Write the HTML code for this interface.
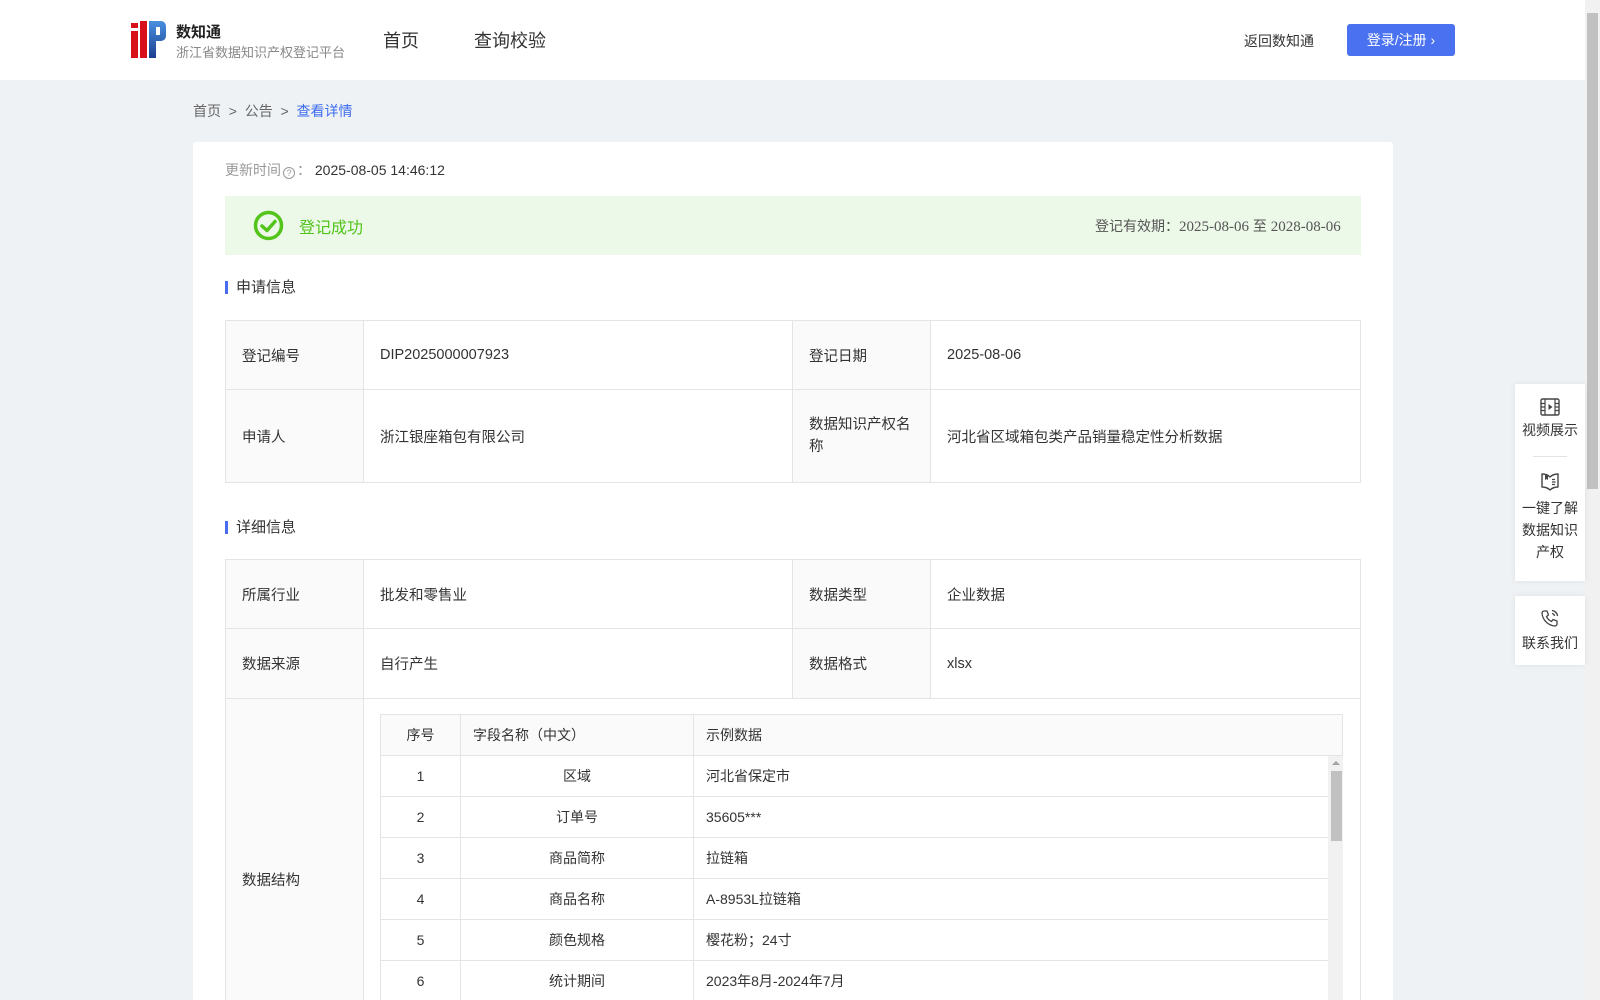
<!DOCTYPE html>
<html><head><meta charset="utf-8">
<style>
*{margin:0;padding:0;box-sizing:border-box}
html,body{width:1600px;height:1000px;overflow:hidden}
body{background:#eff2f5;font-family:"Liberation Sans","Noto Sans CJK SC",sans-serif;font-size:14px;color:#333;position:relative}
#wrap{position:absolute;left:0;top:0;width:1600px;height:1000px;overflow:hidden}
.a{position:absolute}
.hdr{left:0;top:0;width:1585px;height:80px;background:#fff}
.card{left:193px;top:142px;width:1200px;height:858px;background:#fff;border-radius:3px 3px 0 0}
table{border-collapse:collapse;position:absolute}
td{border:1px solid #e4e4e4;padding:0 16px;font-size:14.5px;color:#333}
td.l{background:#fafafa}
.it td{height:41px;padding:0 12px;font-size:14px}
.it td.c{text-align:center}
.sec{font-size:15px;color:#333;padding-left:8px;border-left:3px solid #4a6cf0;line-height:13px}
.fl{background:#fff;box-shadow:0 0 6px rgba(0,0,0,.08);text-align:center;font-size:14px;color:#333}
</style></head><body><div id="wrap">
<div class="a hdr"></div>
<svg class="a" style="left:131px;top:21px" width="35" height="37" viewBox="0 0 35 37">
<defs><linearGradient id="g" x1="0" y1="0" x2="0" y2="1"><stop offset="0" stop-color="#4a90e0"/><stop offset="1" stop-color="#1d3f8f"/></linearGradient></defs>
<rect x="0" y="2" width="7" height="5" fill="#d8101a"/>
<rect x="0" y="10" width="7" height="27" fill="#d8101a"/>
<rect x="9" y="0" width="7" height="37" fill="#d8101a"/>
<path d="M18 0h12a5 5 0 0 1 5 5v10a5 5 0 0 1-5 5h-5v17h-7z" fill="url(#g)"/>
<rect x="25" y="6" width="4" height="8" fill="#fff"/>
</svg>
<div class="a" style="left:176px;top:21px;font-size:15px;font-weight:bold;color:#222">数知通</div>
<div class="a" style="left:176px;top:42px;font-size:13px;color:#888">浙江省数据知识产权登记平台</div>
<div class="a" style="left:383px;top:27px;font-size:18px;color:#333">首页</div>
<div class="a" style="left:474px;top:27px;font-size:18px;color:#333">查询校验</div>
<div class="a" style="left:1244px;top:31px;font-size:14px;color:#333">返回数知通</div>
<div class="a" style="left:1347px;top:24px;width:108px;height:32px;background:#4a72f0;border-radius:3px;color:#fff;font-size:14px;line-height:32px;text-align:center">登录/注册 ›</div>
<div class="a" style="left:1585px;top:0;width:15px;height:1000px;background:#f1f1f1"></div>
<div class="a" style="left:1587px;top:13px;width:11px;height:476px;background:#c1c1c1"></div>

<div class="a" style="left:193px;top:101px;font-size:14px;color:#666">首页 &nbsp;&gt;&nbsp; 公告 &nbsp;&gt;&nbsp; <span style="color:#3c6cf0">查看详情</span></div>
<div class="a card"></div>
<div class="a" style="left:225px;top:160px;font-size:14px;color:#999">更新时间<span style="display:inline-block;width:12px;height:12px;border:1px solid #999;border-radius:50%;font-size:9px;line-height:10px;text-align:center;vertical-align:-1px;margin:0 2px">?</span>： <span style="color:#333">2025-08-05 14:46:12</span></div>
<div class="a" style="left:225px;top:196px;width:1136px;height:59px;background:#ecf8e8"></div>
<svg class="a" style="left:253px;top:210px" width="31" height="31" viewBox="0 0 31 31"><circle cx="15.5" cy="15.5" r="13" fill="none" stroke="#52c41a" stroke-width="3.5"/><path d="M9 16l5 4.5 8-9" fill="none" stroke="#52c41a" stroke-width="3.5" stroke-linecap="round" stroke-linejoin="round"/></svg>
<div class="a" style="left:299px;top:214px;font-size:16px;color:#52c41a">登记成功</div>
<div class="a" style="left:1095px;top:216px;font-size:14px;color:#555">登记有效期：<span style="font-family:'Liberation Serif',serif;font-size:15px">2025-08-06</span> 至 <span style="font-family:'Liberation Serif',serif;font-size:15px">2028-08-06</span></div>

<div class="a sec" style="left:225px;top:281px">申请信息</div>
<table style="left:225px;top:320px;width:1136px">
<tr style="height:69px"><td class="l" style="width:138px">登记编号</td><td style="width:429px">DIP2025000007923</td><td class="l" style="width:138px">登记日期</td><td>2025-08-06</td></tr>
<tr style="height:93px"><td class="l">申请人</td><td>浙江银座箱包有限公司</td><td class="l" style="line-height:22px">数据知识产权名称</td><td>河北省区域箱包类产品销量稳定性分析数据</td></tr>
</table>

<div class="a sec" style="left:225px;top:521px">详细信息</div>
<table style="left:225px;top:559px;width:1136px">
<tr style="height:69px"><td class="l" style="width:138px">所属行业</td><td style="width:429px">批发和零售业</td><td class="l" style="width:138px">数据类型</td><td>企业数据</td></tr>
<tr style="height:70px"><td class="l">数据来源</td><td>自行产生</td><td class="l">数据格式</td><td>xlsx</td></tr>
<tr style="height:302px"><td class="l" style="vertical-align:top;padding-top:170px;border-bottom:none">数据结构</td><td colspan="3" style="border-bottom:none"></td></tr>
</table>
<table class="it" style="left:380px;top:714px;width:963px">
<tr><td class="l c" style="width:80px">序号</td><td class="l" style="width:233px">字段名称（中文）</td><td class="l">示例数据</td></tr>
<tr><td class="c">1</td><td class="c">区域</td><td>河北省保定市</td></tr>
<tr><td class="c">2</td><td class="c">订单号</td><td>35605***</td></tr>
<tr><td class="c">3</td><td class="c">商品简称</td><td>拉链箱</td></tr>
<tr><td class="c">4</td><td class="c">商品名称</td><td>A-8953L拉链箱</td></tr>
<tr><td class="c">5</td><td class="c">颜色规格</td><td>樱花粉；24寸</td></tr>
<tr><td class="c" style="border-bottom:none">6</td><td class="c" style="border-bottom:none">统计期间</td><td style="border-bottom:none">2023年8月-2024年7月</td></tr>
</table>
<div class="a" style="left:1328px;top:756px;width:15px;height:244px;background:#f1f1f1"></div>
<div class="a" style="left:1331px;top:771px;width:11px;height:70px;background:#c1c1c1"></div>
<div class="a" style="left:1332px;top:761px;width:0;height:0;border-left:4px solid transparent;border-right:4px solid transparent;border-bottom:4px solid #a3a3a3"></div>

<div class="a fl" style="left:1515px;top:384px;width:70px;height:197px">
<svg style="margin-top:14px" width="20" height="18" viewBox="0 0 20 18"><rect x="1" y="1" width="18" height="16" rx="1.5" fill="none" stroke="#444" stroke-width="1.4"/><path d="M5 1v16M15 1v16M1 5.5h4M1 9h4M1 12.5h4M15 5.5h4M15 9h4M15 12.5h4" stroke="#444" stroke-width="1.2"/><path d="M8.5 6v6l4-3z" fill="#444"/></svg>
<div style="margin-top:1px;line-height:20px">视频展示</div>
<div style="width:34px;height:1px;background:#e3e3e3;margin:16px auto 14px"></div>
<svg width="20" height="20" viewBox="0 0 20 20"><path d="M2 3c3 0 6 1 8 3 2-2 5-3 8-3v13c-3 0-6 1-8 3-2-2-5-3-8-3z" fill="none" stroke="#444" stroke-width="1.4" stroke-linejoin="round"/><path d="M5 4v5l1.5-1 1.5 1V4.5" fill="#444"/><path d="M12 8.5h3M12 11h3.5M12 13.5h3" stroke="#444" stroke-width="1.2"/></svg>
<div style="line-height:22px;margin-top:3px">一键了解<br>数据知识<br>产权</div>
</div>
<div class="a fl" style="left:1515px;top:596px;width:70px;height:69px">
<svg style="margin-top:12px" width="20" height="20" viewBox="0 0 20 20"><path d="M4 3l3 0 1.5 4-2 1.5c1 2.3 2.7 4 5 5l1.5-2 4 1.5v3c0 1-1 2-2 2C8 17.5 2.5 12 2 5c0-1 1-2 2-2z" fill="none" stroke="#444" stroke-width="1.3" stroke-linejoin="round"/><path d="M12 2.5a6 6 0 0 1 5.5 5.5M12 5.5a3 3 0 0 1 2.5 2.5" fill="none" stroke="#444" stroke-width="1.3"/></svg>
<div style="line-height:20px;margin-top:2px">联系我们</div>
</div>
</div></body></html>
